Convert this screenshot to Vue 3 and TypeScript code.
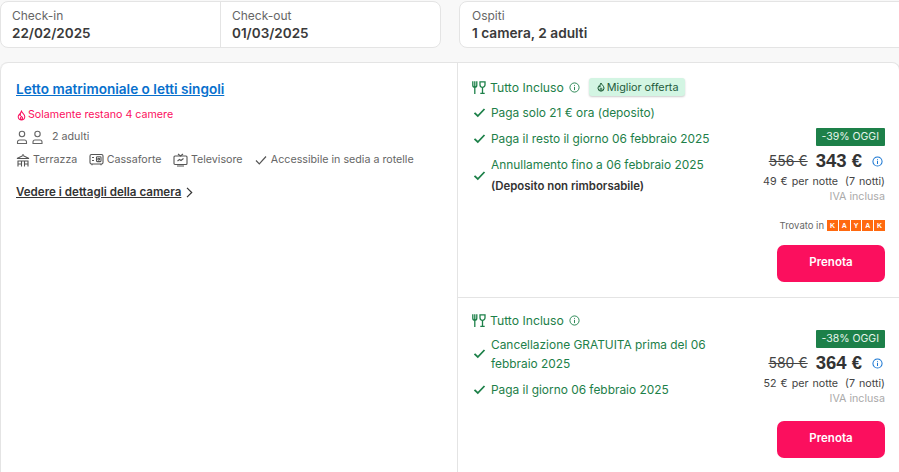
<script setup lang="ts">
interface Offer {
  perks: { text: string; note?: string }[]
  best: boolean
  discount: string
  oldPrice: string
  price: string
  nightly: string
  found: boolean
}

const offers: Offer[] = [
  {
    best: true,
    perks: [
      { text: 'Paga solo 21 € ora (deposito)' },
      { text: 'Paga il resto il giorno 06 febbraio 2025' },
      { text: 'Annullamento fino a 06 febbraio 2025', note: '(Deposito non rimborsabile)' },
    ],
    discount: '-39% OGGI',
    oldPrice: '556 €',
    price: '343 €',
    nightly: '49 € per notte',
    found: true,
  },
  {
    best: false,
    perks: [
      { text: 'Cancellazione GRATUITA prima del 06 febbraio 2025' },
      { text: 'Paga il giorno 06 febbraio 2025' },
    ],
    discount: '-38% OGGI',
    oldPrice: '580 €',
    price: '364 €',
    nightly: '52 € per notte',
    found: false,
  },
]

const kayak = ['K', 'A', 'Y', 'A', 'K']

const flame = 'M6 1.200c.3 1.800 3.600 3.300 3.600 6.200A3.600 3.600 0 0 1 6 11a3.600 3.600 0 0 1-3.600-3.600c0-1.400.7-2.300 1.400-3 .1 1 .5 1.500 1 1.700C4.600 4.200 5 2.500 6 1.200zM6 7c-.7.700-1.200 1.100-1.200 1.800a1.200 1.200 0 0 0 2.400 0C7.200 8.100 6.700 7.700 6 7z'
</script>

<template>
  <div class="page">
    <div class="search">
      <div class="box dates">
        <div class="field">
          <span class="label">Check-in</span>
          <strong class="value">22/02/2025</strong>
        </div>
        <div class="field second">
          <span class="label">Check-out</span>
          <strong class="value">01/03/2025</strong>
        </div>
      </div>
      <div class="box guests">
        <div class="field">
          <span class="label">Ospiti</span>
          <strong class="value small">1 camera, 2 adulti</strong>
        </div>
      </div>
    </div>

    <div class="room">
      <section class="info">
        <a class="title">Letto matrimoniale o letti singoli</a>
        <p class="scarcity">
          <svg width="11" height="11" viewBox="0 0 12 12"><path :d="flame" fill="none" stroke="#fb0f5e" stroke-width="1.100" /></svg>
          Solamente restano 4 camere
        </p>
        <p class="people">
          <svg width="28" height="15" viewBox="0 0 28 15" fill="none" stroke="#666" stroke-width="1.100">
            <circle cx="6" cy="4" r="2.700" />
            <path d="M1.500 13.500v-1.500a2 2 0 0 1 2-2h5a2 2 0 0 1 2 2v1.500z" />
            <circle cx="21.500" cy="4" r="2.700" />
            <path d="M17 13.500v-1.500a2 2 0 0 1 2-2h5a2 2 0 0 1 2 2v1.500z" />
          </svg>
          <span>2 adulti</span>
        </p>
        <ul class="amenities">
          <li>
            <svg width="14" height="14" viewBox="0 0 14 14" fill="none" stroke="#555" stroke-width="1.100">
              <path d="M1 5.500 7 2.500l6 3zM7 1v1.500M1.500 8h11M2 8v5.500M5.500 8v5.500M8.500 8v5.500M12 8v5.500M2 11h3.500M8.500 11H12" />
            </svg>
            Terrazza
          </li>
          <li>
            <svg width="15" height="14" viewBox="0 0 15 14" fill="none" stroke="#555" stroke-width="1.100">
              <rect x="1" y="1.500" width="13" height="9.500" rx="1.500" />
              <rect x="7.500" y="3.800" width="4.500" height="4.800" rx=".8" />
              <circle cx="9.700" cy="6.200" r=".9" />
              <path d="M3 4.500h2M3 7.500h2M3 11v1.200M12 11v1.200" />
            </svg>
            Cassaforte
          </li>
          <li>
            <svg width="15" height="14" viewBox="0 0 15 14" fill="none" stroke="#555" stroke-width="1.100">
              <rect x="1" y="3" width="13" height="8.500" rx="1" />
              <path d="M5 1l2.500 2L10 1M4 13h7M4.500 8l2-1.500 1.500 1 2.500-2" />
            </svg>
            Televisore
          </li>
          <li>
            <svg width="14" height="14" viewBox="0 0 14 14" fill="none" stroke="#555" stroke-width="1.200"><path d="m2 7.500 3.300 3.300L12 3.500" /></svg>
            Accessibile in sedia a rotelle
          </li>
        </ul>
        <a class="details">
          <span>Vedere i dettagli della camera</span>
          <svg width="7" height="11" viewBox="0 0 7 11" fill="none" stroke="#333" stroke-width="1.200"><path d="m1 .8 4.700 4.700L1 10.200" /></svg>
        </a>
      </section>

      <section class="offers">
        <article v-for="o in offers" :key="o.price" class="offer" :class="{ last: !o.found }">
          <div class="perks">
            <div class="board">
              <svg class="fork" width="14" height="13" viewBox="0 0 14 13" fill="none" stroke="#1d8049" stroke-width="1.300">
                <path d="M.8.300v3.900a2 2 0 0 0 4 0V.300M2.800.300V13M8 .8h5v3a2.500 2.500 0 0 1-5 0zM10.500 6.300v6M8.300 12.400h4.400" />
              </svg>
              <span class="board-name">Tutto Incluso</span>
              <svg class="tip" width="11" height="11" viewBox="0 0 12 12" fill="none" stroke="#1d8049" stroke-width="1">
                <circle cx="6" cy="6" r="5" />
                <path d="M6 5.300v3.500M6 3.200v1" />
              </svg>
              <span v-if="o.best" class="best">
                <svg width="10" height="10" viewBox="0 0 12 12"><path :d="flame" fill="none" stroke="#14532d" stroke-width="1.200" /></svg>
                Miglior offerta
              </span>
            </div>
            <div v-for="p in o.perks" :key="p.text" class="perk">
              <svg width="13" height="11" viewBox="0 0 13 11" fill="none" stroke="#1d8049" stroke-width="1.800"><path d="m1.500 5.800 3.300 3.200 6.700-7" /></svg>
              <div>
                <div>{{ p.text }}</div>
                <div v-if="p.note" class="note">{{ p.note }}</div>
              </div>
            </div>
          </div>

          <div class="pricing">
            <span class="discount">{{ o.discount }}</span>
            <div class="prices">
              <s>{{ o.oldPrice }}</s>
              <strong>{{ o.price }}</strong>
              <svg width="11" height="11" viewBox="0 0 12 12" fill="none" stroke="#1976d2" stroke-width="1.100">
                <circle cx="6" cy="6" r="5" />
                <path d="M6 5.300v3.500M6 3.200v1" />
              </svg>
            </div>
            <div class="nightly">{{ o.nightly }}<span>(7 notti)</span></div>
            <div class="tax">IVA inclusa</div>
            <div v-if="o.found" class="found">
              Trovato in
              <span class="kayak"><i v-for="(l, i) in kayak" :key="i">{{ l }}</i></span>
            </div>
            <button class="book">Prenota</button>
          </div>
        </article>
      </section>
    </div>
  </div>
</template>

<style>
body {
  background: #f8f8f8;
}
</style>

<style scoped>
.page {
  width: 899px;
  height: 472px;
  overflow: hidden;
  padding-top: 1px;
  box-sizing: border-box;
  font-family: Inter, "Noto Sans", sans-serif;
  color: #333;
}

.search {
  display: grid;
  grid-template-columns: 441px 1fr;
  column-gap: 18px;
  margin-right: -10px;
}

.box {
  height: 47px;
  box-sizing: border-box;
  background: #fff;
  border: 1px solid #e4e4e4;
  border-radius: 8px;
  display: flex;
}

.field {
  display: flex;
  flex-direction: column;
  padding: 5px 11px;
  flex: 1;
}

.guests .field {
  padding-left: 12px;
}

.field.second {
  border-left: 1px solid #e4e4e4;
}

.label {
  font-size: 12px;
  line-height: 17px;
  color: #666;
}

.value {
  font-size: 13.500px;
  line-height: 18px;
  font-weight: 600;
  color: #3a3a3a;
}

.value.small {
  font-size: 13.700px;
}

.room {
  margin-top: 14px;
  height: 420px;
  display: grid;
  grid-template-columns: 458px 1fr;
  background: #fff;
  border: 1px solid #e4e4e4;
  border-left: 0;
  border-radius: 8px 8px 0 0;
  margin-right: -1px;
}

.info {
  padding: 16px 15px;
  border-right: 1px solid #e4e4e4;
  border-left: 1px solid #e4e4e4;
  border-radius: 8px 0 0 0;
}

.title {
  display: block;
  font-size: 13.600px;
  line-height: 20px;
  font-weight: 600;
  color: #0770cd;
  text-decoration: underline;
}

.scarcity {
  margin: 8px 0 0;
  font-size: 10.700px;
  line-height: 16px;
  color: #fb0f5e;
  display: flex;
  align-items: center;
  gap: 1px;
}

.people {
  margin: 6px 0 0;
  font-size: 10.700px;
  line-height: 16px;
  color: #666;
  display: flex;
  align-items: center;
  gap: 8px;
}

.amenities {
  list-style: none;
  margin: 7px 0 0;
  padding: 0;
  display: flex;
  gap: 11.300px;
  font-size: 10.700px;
  line-height: 16px;
  color: #666;
}

.amenities li {
  display: flex;
  align-items: center;
  gap: 3px;
  white-space: nowrap;
}

.details {
  margin-top: 16px;
  display: flex;
  align-items: center;
  gap: 5px;
  font-size: 11.600px;
  line-height: 16px;
  font-weight: 600;
  color: #333;
}

.details span {
  text-decoration: underline;
}

.offer {
  height: 235px;
  box-sizing: border-box;
  border-bottom: 1px solid #e4e4e4;
  padding: 14px 14px 0;
  display: flex;
  justify-content: space-between;
}

.offer.last {
  border-bottom: 0;
  height: auto;
  padding-top: 12px;
}

.perks {
  width: 250px;
  font-size: 11.900px;
  line-height: 19px;
  color: #1d8049;
}

.board {
  display: flex;
  align-items: center;
  height: 20px;
}

.board-name {
  font-size: 12.200px;
}

.fork {
  margin-right: 4px;
}

.tip {
  margin-left: 5px;
}

.best {
  margin-left: 9px;
  padding: 0 6px 0 7px;
  height: 18px;
  background: #d3f5e3;
  border-radius: 3px;
  box-shadow: 0 1px 2px rgba(0, 0, 0, 0.2);
  color: #1f5a3c;
  font-size: 10.800px;
  display: flex;
  align-items: center;
  gap: 1px;
  white-space: nowrap;
}

.perk {
  display: flex;
  align-items: center;
  gap: 5px;
  margin-top: 6.500px;
}

.perk:nth-child(2) {
  margin-top: 5.500px;
  margin-bottom: 7px;
}

.perk:nth-child(4) {
  margin-top: 7px;
}

.offer.last .perk:nth-child(2) {
  margin-top: 4.500px;
}

.perk svg {
  flex: none;
  margin-left: 1px;
}

.note {
  margin-top: 3px;
  font-size: 11.400px;
  font-weight: 600;
  color: #333;
}

.pricing {
  display: flex;
  flex-direction: column;
  align-items: flex-end;
  padding-top: 51px;
}

.offer.last .pricing {
  padding-top: 20px;
}

.discount {
  background: #1d8049;
  color: #e6f5ec;
  font-size: 10.500px;
  line-height: 18px;
  padding: 0 6px;
  border-radius: 1px;
}

.prices {
  margin-top: 3px;
  display: flex;
  align-items: center;
  line-height: 24px;
}

.prices s {
  font-size: 14px;
  color: #444;
}

.prices strong {
  margin: 0 10px 0 8px;
  font-family: "Liberation Sans", sans-serif;
  font-size: 18.500px;
  color: #333;
}

.prices svg {
  margin-right: 2px;
}

.nightly {
  margin-top: 1px;
  font-size: 10.700px;
  line-height: 16px;
  word-spacing: 1px;
  color: #444;
  white-space: nowrap;
}

.nightly span {
  margin-left: 7px;
}

.tax {
  font-size: 10.700px;
  line-height: 13px;
  color: #aaa;
}

.found {
  margin-top: 17px;
  font-size: 9.500px;
  color: #666;
  display: flex;
  align-items: center;
  gap: 3px;
}

.kayak {
  display: flex;
  gap: 1px;
}

.kayak i {
  width: 10.800px;
  height: 11px;
  background: #ff690f;
  color: #fff;
  font: 700 7px/11px "Liberation Sans", sans-serif;
  text-align: center;
}

.book {
  margin-top: 14px;
  width: 108px;
  height: 37px;
  padding: 0 0 4px;
  border: 0;
  border-radius: 7px;
  background: #fb0f5e;
  color: #fff;
  font-family: inherit;
  font-size: 11.500px;
  font-weight: 600;
}

.offer.last .book {
  margin-top: 16px;
}
</style>
